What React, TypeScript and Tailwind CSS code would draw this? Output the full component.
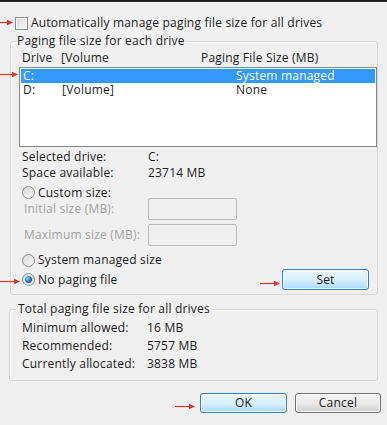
import React from 'react';

const font = "font-['Open_Sans','Noto_Sans',Arial,sans-serif] tracking-[0.2px]";

const Arrow: React.FC<{ x: number; y: number; w: number }> = ({ x, y, w }) => (
  <svg
    className="absolute"
    style={{ left: x, top: y - 3 }}
    width={w}
    height={7}
    viewBox={`0 0 ${w} 7`}
  >
    <line x1={0} y1={3.5} x2={w - 4} y2={3.5} stroke="#e4312b" strokeWidth={1.2} />
    <path d={`M${w - 6} 0.8 L${w} 3.5 L${w - 6} 6.2 Z`} fill="#e4312b" />
  </svg>
);

const Radio: React.FC<{ checked?: boolean }> = ({ checked }) => (
  <div className="w-[13px] h-[13px] rounded-full border border-[#8d8f90] bg-gradient-to-br from-[#d4d4d4] to-[#fbfbfb] flex items-center justify-center shrink-0">
    {checked && (
      <div className="w-[7px] h-[7px] rounded-full bg-[radial-gradient(circle_at_35%_35%,#8fd3f5,#1f6ea8_55%,#0d3a5e)]" />
    )}
  </div>
);

const Btn: React.FC<{ label: string; primary?: boolean; w: string }> = ({ label, primary, w }) => (
  <button
    type="button"
    className={
      primary
        ? `${w} h-[20px] rounded-[3px] border border-[#3c7fb1] bg-gradient-to-b from-[#eaf6fd] via-[#d9f0fc] to-[#a9daf6] text-[12px] leading-[16px] text-[#1a1a1a] shadow-[inset_0_0_0_1px_#f4fbff]`
        : `${w} h-[20px] rounded-[3px] border border-[#707070] bg-gradient-to-b from-[#f4f4f4] via-[#e9e9e9] to-[#d2d2d2] text-[12px] leading-[16px] text-[#1a1a1a] shadow-[inset_0_0_0_1px_#fafafa]`
    }
  >
    {label}
  </button>
);

const App: React.FC = () => {
  return (
    <div className={`relative w-[387px] h-[425px] overflow-hidden bg-[#f0f0f0] text-[12px] text-[#1c1c1c] ${font}`}>
      <div className="h-[2px] bg-gradient-to-b from-[#111] to-[#3a3a3a]" />

      {/* auto manage checkbox */}
      <div className="mt-[14px] ml-[15px] flex items-center h-[14px] leading-[14px]">
        <div className="w-[13px] h-[13px] border border-[#8e8f8f] bg-gradient-to-br from-[#dcdcdc] to-[#f8f8f8] shadow-[inset_0_0_0_1px_#f4f4f4]" />
        <span className="ml-[3px]">Automatically manage paging file size for all drives</span>
      </div>

      {/* paging file size for each drive */}
      <fieldset className="mt-[4px] ml-[10px] w-[368px] border border-[#d5d5d5] rounded-[3px] pl-[8px] pb-[4px] shadow-[inset_1px_1px_0_#fff]">
        <legend className="-ml-[4px] px-[2px] leading-[14px]">Paging file size for each drive</legend>
        <div className="mt-[3px] flex h-[14px] leading-[14px]">
          <span className="ml-[3px] w-[39px]">Drive</span>
          <span className="w-[140px]">[Volume</span>
          <span>Paging File Size (MB)</span>
        </div>
        <div className="mt-[2px] h-[80px] border border-[#828790] bg-white p-[1px]">
          <div className="flex h-[14px] leading-[14px] bg-[#3399ff] text-white">
            <span className="ml-[2px] w-[39px]">C:</span>
            <span className="w-[174px]"></span>
            <span>System managed</span>
          </div>
          <div className="flex h-[14px] leading-[14px]">
            <span className="ml-[2px] w-[39px]">D:</span>
            <span className="w-[174px]">[Volume]</span>
            <span>None</span>
          </div>
        </div>

        <div className="mt-[2px] ml-[3px] flex h-[16px] leading-[16px]">
          <span className="w-[126px]">Selected drive:</span>
          <span>C:</span>
        </div>
        <div className="ml-[3px] flex h-[16px] leading-[16px]">
          <span className="w-[126px]">Space available:</span>
          <span>23714 MB</span>
        </div>

        <div className="mt-[5px] ml-[3px] flex items-center h-[13px] leading-[13px]">
          <Radio />
          <span className="ml-[3px]">Custom size:</span>
        </div>
        <div className="-mt-[1px] ml-[5px] flex items-center h-[22px] text-[#a2a2a2]">
          <span className="w-[124px]">Initial size (MB):</span>
          <div className="w-[89px] h-[22px] border border-[#bcbcbc] rounded-[2px] bg-[#f0f0f0]" />
        </div>
        <div className="mt-[4px] ml-[5px] flex items-center h-[22px] text-[#a2a2a2]">
          <span className="w-[124px]">Maximum size (MB):</span>
          <div className="w-[89px] h-[22px] border border-[#bcbcbc] rounded-[2px] bg-[#f0f0f0]" />
        </div>

        <div className="mt-[7px] ml-[3px] flex items-center h-[14px] leading-[14px]">
          <Radio />
          <span className="ml-[3px]">System managed size</span>
        </div>
        <div className="mt-[2px] ml-[3px] mr-[8px] flex items-center h-[21px]">
          <Radio checked />
          <span className="ml-[3px]">No paging file</span>
          <div className="ml-auto">
            <Btn label="Set" primary w="w-[87px] h-[21px]" />
          </div>
        </div>
      </fieldset>

      {/* totals */}
      <fieldset className="mt-[7px] ml-[9px] w-[369px] border border-[#d5d5d5] rounded-[3px] pl-[12px] pb-[7px] shadow-[inset_1px_1px_0_#fff]">
        <legend className="-ml-[6px] px-[2px] leading-[14px]">Total paging file size for all drives</legend>
        <div className="mt-[3px]">
          {[
            ['Minimum allowed:', '16 MB'],
            ['Recommended:', '5757 MB'],
            ['Currently allocated:', '3838 MB'],
          ].map(([k, v]) => (
            <div key={k} className="flex h-[18px] leading-[18px]">
              <span className="w-[125px]">{k}</span>
              <span>{v}</span>
            </div>
          ))}
        </div>
      </fieldset>

      <div className="mt-[12px] mr-[6px] flex justify-end gap-[8px]">
        <Btn label="OK" primary w="w-[87px]" />
        <Btn label="Cancel" w="w-[86px]" />
      </div>

      <Arrow x={0} y={22} w={13} />
      <Arrow x={0} y={74} w={18} />
      <Arrow x={0} y={281} w={20} />
      <Arrow x={260} y={283} w={20} />
      <Arrow x={175} y={406} w={20} />
    </div>
  );
};

export default App;
